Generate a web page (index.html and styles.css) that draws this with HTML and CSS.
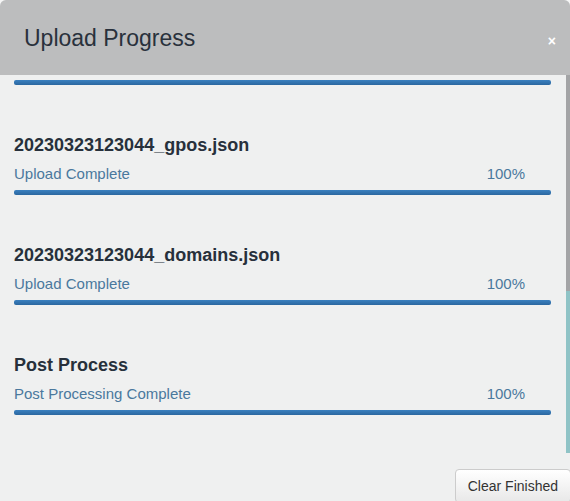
FILE: index.html
```html
<!DOCTYPE html>
<html>
<head>
<meta charset="utf-8">
<link rel="stylesheet" href="styles.css">
</head>
<body>
<div class="modal">
  <div class="modal-header">
    <h3 class="modal-title">Upload Progress</h3>
    <span class="close">×</span>
  </div>
  <div class="modal-body">
    <div class="list">
      <div class="bar"></div>
      <div class="item">
        <h4 class="name">20230323123044_gpos.json</h4>
        <div class="status"><span>Upload Complete</span><span>100%</span></div>
        <div class="bar"></div>
      </div>
      <div class="item">
        <h4 class="name">20230323123044_domains.json</h4>
        <div class="status"><span>Upload Complete</span><span>100%</span></div>
        <div class="bar"></div>
      </div>
      <div class="item">
        <h4 class="name">Post Process</h4>
        <div class="status"><span>Post Processing Complete</span><span>100%</span></div>
        <div class="bar"></div>
      </div>
    </div>
    <div class="strip">
      <div class="strip-gray"></div>
      <div class="strip-teal"></div>
    </div>
  </div>
  <div class="modal-footer">
    <button class="btn">Clear Finished</button>
  </div>
</div>
</body>
</html>
```
FILE: styles.css
```css
html, body {
  margin: 0;
  padding: 0;
  background: #f6f6f6;
  font-family: "Liberation Sans", Arial, sans-serif;
}
.modal {
  width: 570px;
  height: 501px;
  background: #eff0f0;
  border-radius: 6px 6px 0 0;
  overflow: hidden;
  display: flex;
  flex-direction: column;
}
.modal-header {
  height: 75px;
  flex: none;
  background: #bcbdbe;
  display: flex;
  align-items: center;
  justify-content: space-between;
  padding: 0 14px 0 24px;
  box-sizing: border-box;
}
.modal-title {
  margin: 0;
  font-size: 23px;
  font-weight: normal;
  color: #29313c;
  line-height: 28px;
}
.close {
  color: #ffffff;
  font-size: 14px;
  font-weight: bold;
  line-height: 14px;
  position: relative;
  top: 3px;
}
.modal-body {
  height: 378px;
  flex: none;
  display: flex;
}
.list {
  flex: 1;
  padding: 5px 15px 0 14px;
}
.bar {
  height: 5px;
  border-radius: 2px;
  background: linear-gradient(to bottom, #3a80c0 0%, #2a679f 100%);
}
.item {
  margin-top: 49px;
}
.name {
  margin: 0;
  font-size: 18px;
  font-weight: bold;
  line-height: 22px;
  color: #27303b;
}
.status {
  margin-top: 8px;
  margin-bottom: 6px;
  display: flex;
  justify-content: space-between;
  padding-right: 26px;
  font-size: 15px;
  line-height: 20px;
  color: #4a789d;
}
.strip {
  width: 4px;
  flex: none;
  display: flex;
  flex-direction: column;
}
.strip-gray {
  height: 216px;
  background: #a3a4a6;
}
.strip-teal {
  height: 162px;
  background: #8fc3c6;
}
.modal-footer {
  display: flex;
  justify-content: flex-end;
  padding-top: 16px;
}
.btn {
  font-family: "Liberation Sans", Arial, sans-serif;
  font-size: 14px;
  color: #333333;
  height: 34px;
  padding: 6px 12px;
  margin-right: -1px;
  border: 1px solid #cccccc;
  border-radius: 4px;
  background: linear-gradient(to bottom, #ffffff 0%, #e8e8e8 100%);
  line-height: 20px;
}
```
